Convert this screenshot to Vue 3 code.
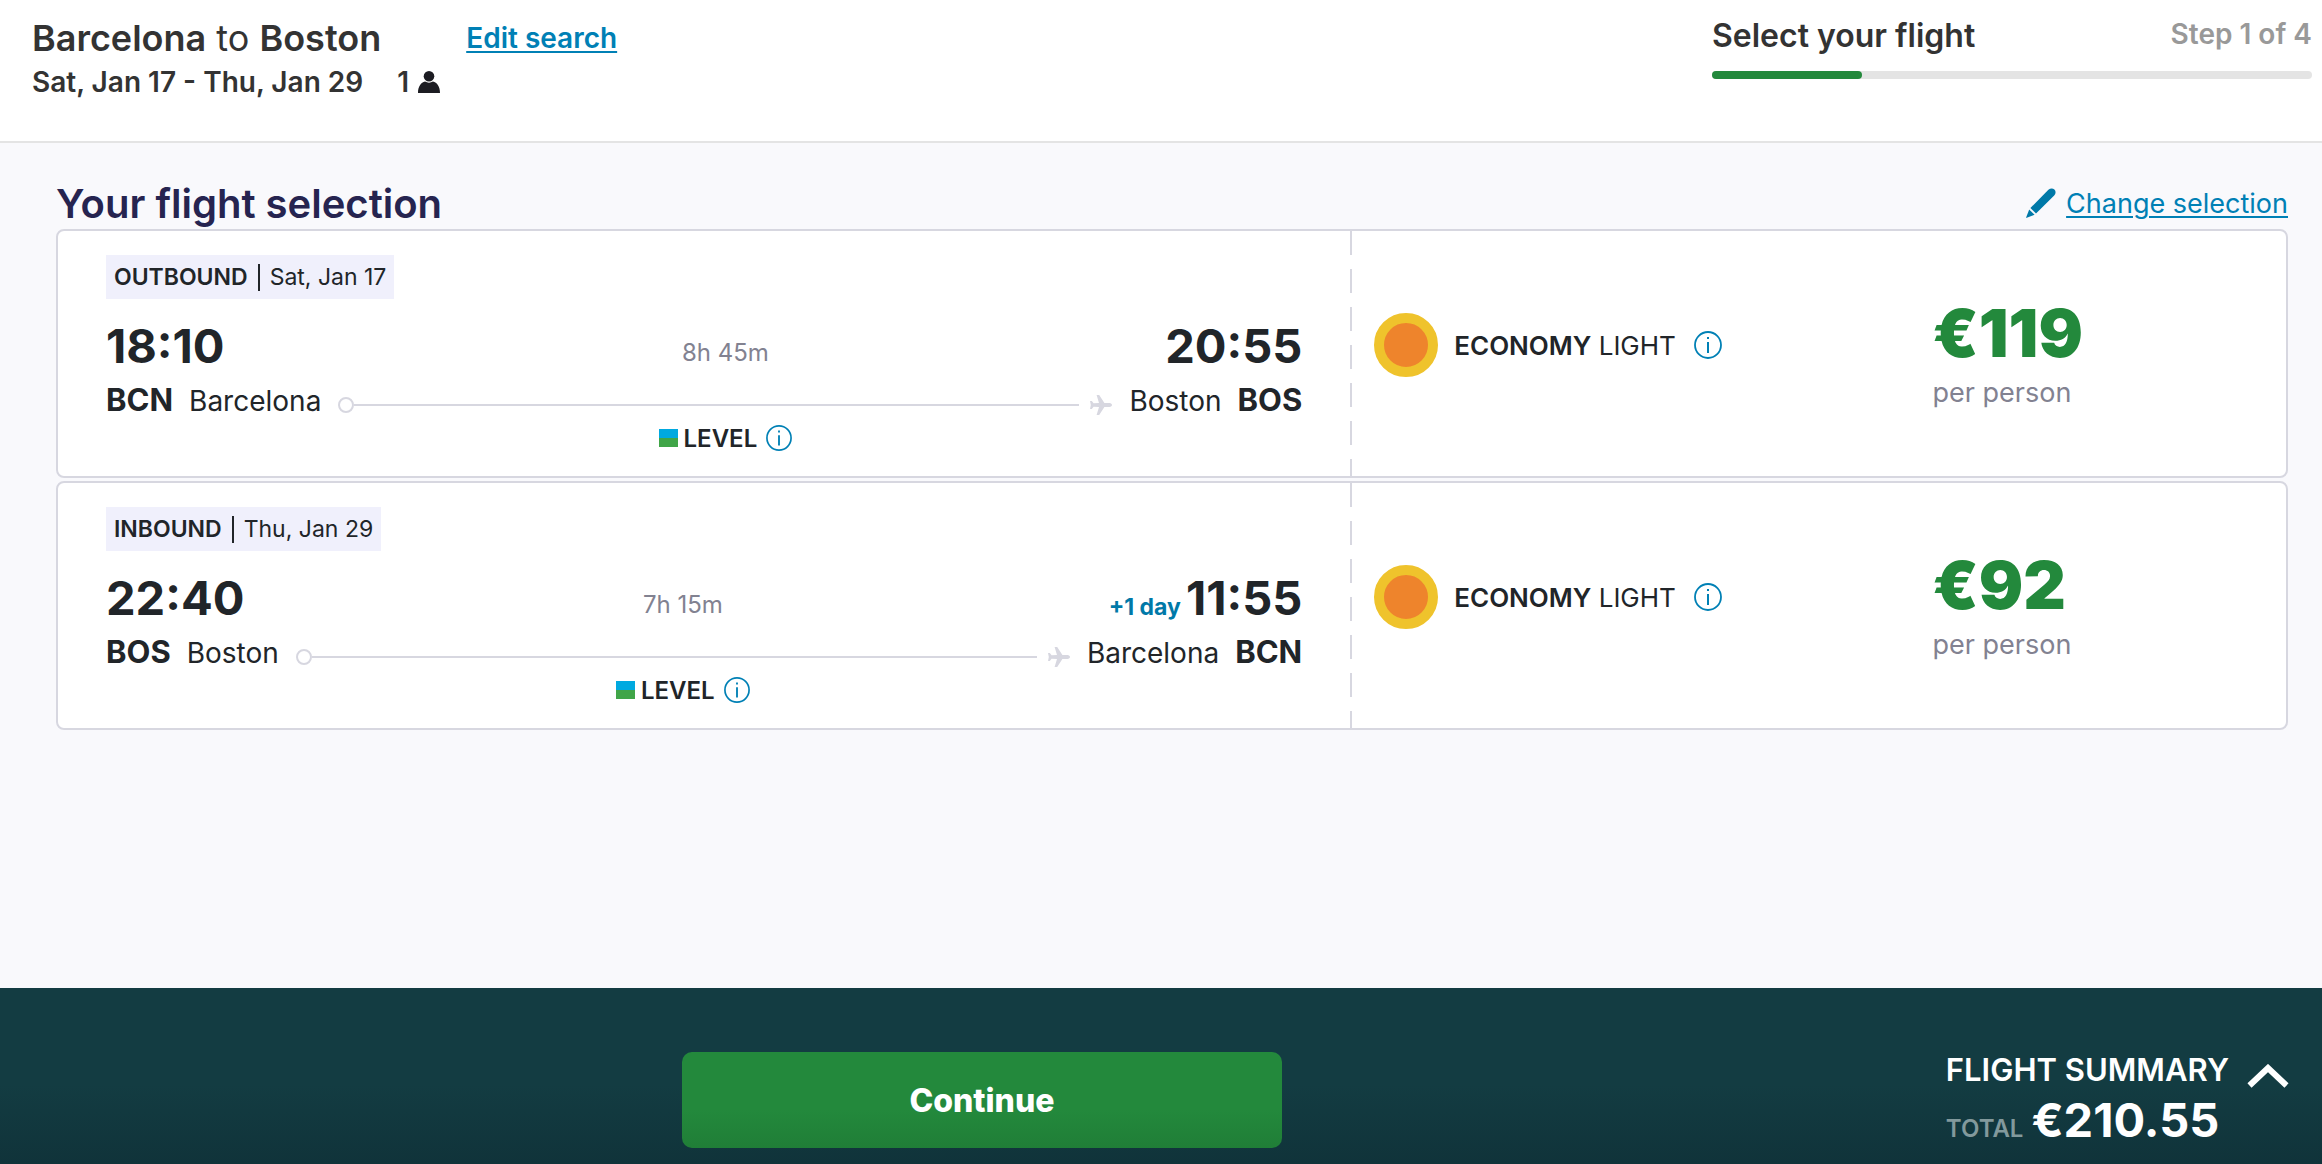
<script setup>
const legs = [
  {
    direction: 'OUTBOUND',
    date: 'Sat, Jan 17',
    from: { time: '18:10', code: 'BCN', city: 'Barcelona' },
    to: { time: '20:55', code: 'BOS', city: 'Boston', nextDay: '' },
    duration: '8h 45m',
    airline: 'LEVEL',
    price: '€119',
  },
  {
    direction: 'INBOUND',
    date: 'Thu, Jan 29',
    from: { time: '22:40', code: 'BOS', city: 'Boston' },
    to: { time: '11:55', code: 'BCN', city: 'Barcelona', nextDay: '+1 day' },
    duration: '7h 15m',
    airline: 'LEVEL',
    price: '€92',
  },
]
const step = 1
const steps = 4
</script>

<template>
  <div class="page">
    <header class="top">
      <div class="trip">
        <div class="trip-row">
          <h1 class="route-title"><b>Barcelona</b> to <b>Boston</b></h1>
          <a href="#" class="edit">Edit search</a>
        </div>
        <p class="dates">
          <span>Sat, Jan 17 - Thu, Jan 29</span>
          <span class="pax">
            1
            <svg class="person" viewBox="0 0 22 22" aria-label="passenger">
              <ellipse cx="11" cy="5.2" rx="5.3" ry="5.2" />
              <path d="M0 22C0 15.5 3 11.6 7 10.6C9.500 12 12.500 12 15 10.600C19 11.600 22 15.500 22 22Z" />
            </svg>
          </span>
        </p>
      </div>
      <div class="progress">
        <div class="progress-text">
          <span class="progress-title">Select your flight</span>
          <span class="progress-step">Step {{ step }} of {{ steps }}</span>
        </div>
        <div class="track">
          <div class="fill" :style="{ width: (step / steps) * 100 + '%' }"></div>
        </div>
      </div>
    </header>

    <main class="content">
      <div class="heading">
        <h2>Your flight selection</h2>
        <a href="#" class="change">
          <svg class="pencil" viewBox="0 0 30 30" aria-hidden="true">
            <path d="M4.400 20L22.400 1.800C24.400 0 26.800 0 28.400 1.600C30 3.200 30 5.600 28.200 7.600L10 25.600Z" />
            <path d="M3.200 21.400L8.600 26.800L0.800 29.800C0.200 30 0 29.800 0.200 29.200Z" />
          </svg>
          <span class="change-text">Change selection</span>
        </a>
      </div>

      <section class="cards">
        <article v-for="leg in legs" :key="leg.direction" class="card">
          <div class="flight">
            <div class="chip">
              <b>{{ leg.direction }}</b>
              <i class="bar"></i>
              <span>{{ leg.date }}</span>
            </div>
            <div class="leg">
              <div class="end">
                <div class="time">{{ leg.from.time }}</div>
                <div class="place">
                  <b>{{ leg.from.code }}</b>
                  <span>{{ leg.from.city }}</span>
                </div>
              </div>
              <div class="middle">
                <div class="duration">{{ leg.duration }}</div>
                <div class="path">
                  <i class="dot"></i>
                  <i class="line"></i>
                  <svg class="plane" viewBox="0 0 22 20" aria-hidden="true">
                    <path d="M0 6H1.800L3.600 8.200L9 8L6.600 0H9.200L14.400 8H19.500C21 8.200 22 9 22 10C22 11 21 11.800 19.500 12H14.400L9.200 20H6.600L9 12L3.600 11.800L1.800 14H0L0.800 10Z" />
                  </svg>
                </div>
                <div class="airline">
                  <i class="logo"></i>
                  <b>{{ leg.airline }}</b>
                  <button type="button" class="info" aria-label="Airline information">
                    <svg viewBox="0 0 28 28">
                      <circle cx="14" cy="14" r="13" fill="none" stroke="currentColor" stroke-width="1.800" />
                      <path d="M14 11V22" stroke="currentColor" stroke-width="2" />
                      <path d="M14 6V8" stroke="currentColor" stroke-width="2" />
                    </svg>
                  </button>
                </div>
              </div>
              <div class="end arrive">
                <div class="time">
                  <span v-if="leg.to.nextDay" class="next-day">{{ leg.to.nextDay }}</span>
                  <span>{{ leg.to.time }}</span>
                </div>
                <div class="place">
                  <span>{{ leg.to.city }}</span>
                  <b>{{ leg.to.code }}</b>
                </div>
              </div>
            </div>
          </div>
          <div class="divider"></div>
          <div class="fare">
            <i class="fare-dot"></i>
            <span class="fare-name"><b>ECONOMY</b> LIGHT</span>
            <button type="button" class="info large" aria-label="Fare information">
              <svg viewBox="0 0 28 28">
                <circle cx="14" cy="14" r="13" fill="none" stroke="currentColor" stroke-width="1.800" />
                <path d="M14 11V22" stroke="currentColor" stroke-width="2" />
                <path d="M14 6V8" stroke="currentColor" stroke-width="2" />
              </svg>
            </button>
          </div>
          <div class="price">
            <div class="amount">{{ leg.price }}</div>
            <div class="per">per person</div>
          </div>
        </article>
      </section>
    </main>

    <footer class="bottom">
      <div class="action">
        <button type="button" class="continue">Continue</button>
      </div>
      <button type="button" class="summary">
        <span class="summary-text">
          <span class="summary-title">FLIGHT SUMMARY</span>
          <span class="summary-total">
            <span class="total-label">TOTAL</span>
            <span class="total">€210.55</span>
          </span>
        </span>
        <svg class="chevron" viewBox="0 0 42 24" aria-hidden="true">
          <path d="M2.500 21.500L21 4L39.500 21.500" fill="none" stroke="#fff" stroke-width="6" />
        </svg>
      </button>
    </footer>
  </div>
</template>

<style>
body {
  margin: 0;
}
</style>

<style scoped>
.page {
  display: flex;
  flex-direction: column;
  min-height: 100vh;
  background: #f9f9fc;
  color: #212529;
  font-family: Inter, "Liberation Sans", sans-serif;
  font-size: 28px;
}
* {
  box-sizing: border-box;
}
h1,
h2,
p {
  margin: 0;
}
b {
  font-weight: 600;
}
i {
  display: block;
}
svg {
  display: block;
}
button {
  border: 0;
  padding: 0;
  background: none;
  color: inherit;
  font: inherit;
  cursor: pointer;
}
a {
  color: #0080b5;
  text-decoration-thickness: 2px;
  text-underline-offset: 3px;
}

.top {
  display: flex;
  justify-content: space-between;
  padding: 16px 10px 37px 32px;
  background: #fff;
  border-bottom: 2px solid #e4e4e4;
  color: #333;
}
.trip-row {
  display: flex;
  align-items: center;
  gap: 85px;
  height: 44px;
}
.route-title {
  font-size: 36px;
  font-weight: 400;
}
.edit {
  font-weight: 600;
}
.dates {
  display: flex;
  align-items: center;
  gap: 34px;
  height: 44px;
  font-size: 28px;
  font-weight: 600;
}
.pax {
  display: flex;
  align-items: center;
  gap: 9px;
}
.person {
  width: 22px;
  height: 22px;
  fill: #1c1c22;
}
.progress {
  width: 600px;
}
.progress-text {
  display: flex;
  justify-content: space-between;
  height: 40px;
  line-height: 40px;
}
.progress-title {
  font-size: 32px;
  font-weight: 600;
}
.progress-step {
  line-height: 36px;
  font-weight: 600;
  color: #999;
}
.track {
  height: 8px;
  margin-top: 15px;
  border-radius: 4px;
  background: #e4e4e4;
}
.fill {
  height: 8px;
  border-radius: 4px;
  background: #23893c;
}

.content {
  flex: 1;
  padding: 34px 34px 0 56px;
}
.heading {
  display: flex;
  justify-content: space-between;
  align-items: center;
  height: 52px;
}
h2 {
  font-size: 40px;
  font-weight: 600;
  color: #262450;
}
.change {
  display: flex;
  align-items: center;
  gap: 10px;
  font-size: 27px;
  text-decoration: none;
}
.change-text {
  text-decoration: underline;
  text-decoration-thickness: 2px;
  text-underline-offset: 3px;
}
.pencil {
  width: 30px;
  height: 30px;
  fill: #0079a8;
}
.cards {
  display: flex;
  flex-direction: column;
  gap: 3px;
}
.card {
  display: flex;
  border: 2px solid #d7d7e0;
  border-radius: 8px;
  background: #fff;
}
.flight {
  flex: 0 0 58%;
  padding: 24px 48px;
}
.chip {
  display: flex;
  align-items: center;
  gap: 10px;
  width: max-content;
  height: 44px;
  padding: 0 8px;
  background: #f0f0fc;
  font-size: 23px;
}
.bar {
  width: 2px;
  height: 27px;
  background: #212529;
}
.leg {
  display: flex;
  gap: 17px;
  margin-top: 19px;
}
.time {
  display: flex;
  align-items: baseline;
  gap: 5px;
  height: 56px;
  line-height: 56px;
  font-size: 47px;
  font-weight: 700;
}
.place {
  display: flex;
  align-items: baseline;
  gap: 16px;
  line-height: 40px;
  margin-top: 6px;
}
.place b {
  font-size: 31px;
  font-weight: 700;
}
.arrive .time,
.arrive .place {
  justify-content: flex-end;
}
.next-day {
  font-size: 23px;
  color: #0079a8;
}
.middle {
  flex: 1;
  display: flex;
  flex-direction: column;
  align-items: center;
  padding-top: 19px;
}
.duration {
  font-size: 24px;
  line-height: 32px;
  color: #828291;
}
.path {
  display: flex;
  align-items: center;
  align-self: stretch;
  height: 24px;
  margin-top: 24px;
}
.dot {
  width: 16px;
  height: 16px;
  border: 2px solid #d7d7e0;
  border-radius: 50%;
}
.line {
  flex: 1;
  height: 2px;
  margin-right: 11px;
  background: #d7d7e0;
}
.plane {
  width: 22px;
  height: 20px;
  fill: #d7d7e0;
}
.airline {
  display: flex;
  align-items: center;
  height: 28px;
  margin-top: 7px;
  font-size: 24px;
}
.logo {
  width: 19px;
  height: 18px;
  margin-right: 6px;
  background: linear-gradient(#00a9e0 50%, #40a548 50%);
}
.info {
  width: 26px;
  height: 26px;
  margin-left: 9px;
  color: #0080b5;
}
.info.large {
  width: 28px;
  height: 28px;
  margin-left: 18px;
}
.divider {
  width: 2px;
  background: repeating-linear-gradient(#d7d7e0 0 24px, transparent 24px 38px);
}
.fare {
  flex: 1;
  display: flex;
  align-items: center;
  align-self: flex-start;
  height: 64px;
  margin-top: 82px;
  padding-left: 22px;
  font-size: 26px;
}
.fare-dot {
  width: 64px;
  height: 64px;
  margin-right: 16px;
  border: 10px solid #efc32c;
  border-radius: 50%;
  background: #ee842c;
}
.price {
  flex: 0 0 16%;
  padding: 70px 0 0 3px;
}
.amount {
  line-height: 64px;
  font-size: 66px;
  font-weight: 900;
  color: #23893c;
}
.per {
  margin-top: 10px;
  line-height: 36px;
  font-size: 27px;
  color: #828291;
}

.bottom {
  display: flex;
  height: 176px;
  padding: 64px 33px 0 18px;
  background: linear-gradient(#133c42 55%, #10333a);
  color: #fff;
}
.action {
  flex: 1;
  display: flex;
  justify-content: center;
}
.continue {
  width: 600px;
  height: 96px;
  border-radius: 10px;
  background: linear-gradient(#23893c 60%, #207e37);
  font-size: 32px;
  font-weight: 800;
}
.summary {
  display: flex;
  align-items: flex-start;
  gap: 18px;
  text-align: left;
}
.summary-text {
  display: block;
}
.summary-title {
  display: block;
  line-height: 36px;
  font-size: 31px;
  font-weight: 600;
}
.summary-total {
  display: flex;
  align-items: baseline;
  gap: 8px;
  line-height: 64px;
}
.total-label {
  font-size: 24px;
  font-weight: 600;
  color: #82999c;
}
.total {
  font-size: 47px;
  font-weight: 700;
}
.chevron {
  width: 42px;
  height: 24px;
  margin-top: 12px;
}
</style>
